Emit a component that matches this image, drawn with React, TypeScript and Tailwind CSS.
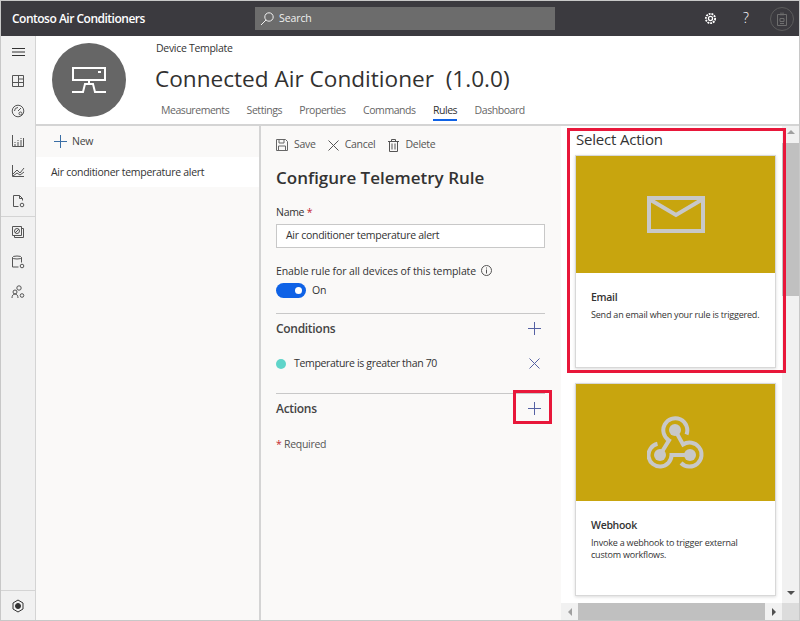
const small = "text-[10.5px] tracking-[-0.28px]";

function NavIcon({ children }: { children: React.ReactNode }) {
  return (
    <div className="flex h-[30px] w-full items-center justify-center text-[#555]">
      <svg width="16" height="16" viewBox="0 0 16 16" fill="none" stroke="currentColor" strokeWidth="1">
        {children}
      </svg>
    </div>
  );
}

function PlusIcon({ color = "#5561a3" }: { color?: string }) {
  return (
    <svg width="13" height="13" viewBox="0 0 13 13" stroke={color} strokeWidth="1">
      <path d="M6.5 0v13M0 6.5h13" />
    </svg>
  );
}

function CrossIcon({ color = "#5561a3" }: { color?: string }) {
  return (
    <svg width="11" height="11" viewBox="0 0 11 11" stroke={color} strokeWidth="1">
      <path d="M.5.5l10 10M10.5.5l-10 10" />
    </svg>
  );
}

function Sidebar() {
  return (
    <aside className="flex w-[35px] shrink-0 flex-col border-r border-[#d4d4d4] bg-[#f1f1f1]">
      <div className="flex h-[30px] items-center justify-center pt-[1px]">
        <svg width="13" height="10" viewBox="0 0 13 10" stroke="#333" strokeWidth="1">
          <path d="M0 1.5h13M0 5h13M0 8.5h13" />
        </svg>
      </div>
      <NavIcon><path d="M2.5 2.5h11v11h-11zM2.5 9.5h11M8.5 2.5v11M8.5 6h5" /></NavIcon>
      <NavIcon>
        <circle cx="8" cy="8" r="5.8" />
        <path d="M8 8l3-3M4.5 8a3.5 3.5 0 0 1 3.5-3.5" />
        <circle cx="10.5" cy="10.5" r="1.5" />
      </NavIcon>
      <NavIcon><path d="M2.5 2v11.5H14M5 11v2M5 9v1M8 9v4M8 7v1M11 7v6M11 5v1M13.5 5v8" /></NavIcon>
      <NavIcon><path d="M2.5 2v11.5H14M3 11l4-4 3 3 4-5M3 13l4-3 3 2 4-3" /></NavIcon>
      <div className="border-b border-[#d4d4d4]">
        <NavIcon>
          <path d="M3.5 2.5h6l3 3v2M3.5 2.5v11h5M9.5 2.5v3h3" />
          <circle cx="12" cy="12" r="1.8" />
        </NavIcon>
      </div>
      <NavIcon>
        <path d="M2.5 2.5h9v9h-9zM4.5 11.5v2h9v-9h-2M5 9l4-4" />
        <circle cx="7" cy="7" r="2.5" />
      </NavIcon>
      <NavIcon>
        <ellipse cx="7" cy="3.5" rx="4.5" ry="1.5" />
        <path d="M2.5 3.5v9.5h6M11.5 3.5v5" />
        <circle cx="12" cy="12" r="1.8" />
      </NavIcon>
      <NavIcon>
        <circle cx="9" cy="4" r="2.2" />
        <circle cx="5" cy="8" r="2" />
        <path d="M2 14c0-2.5 1.2-4 3-4s3 1.5 3 4" />
        <circle cx="12" cy="11.5" r="1.8" />
      </NavIcon>
      <div className="mt-auto flex h-[30px] items-center justify-center border-t border-[#d4d4d4]">
        <svg width="14" height="14" viewBox="0 0 14 14" fill="none" stroke="#333">
          <path d="M7 1l5 3v6l-5 3-5-3V4z" />
          <circle cx="7" cy="7" r="2.5" fill="#333" />
        </svg>
      </div>
    </aside>
  );
}

function TopBar() {
  return (
    <header className="flex h-[35px] shrink-0 items-center bg-[#3b3a3f] pl-[11px] pr-[5px] text-white">
      <span className="w-[243px] text-[12px] font-semibold tracking-[-0.5px]">Contoso Air Conditioners</span>
      <div className="flex h-[23px] w-[300px] items-center gap-[5px] bg-[#6c6c6c] pl-[5px] text-[10.5px] tracking-[-0.1px] text-[#f0f0f0]">
        <svg width="14" height="14" viewBox="0 0 14 14" fill="none" stroke="#f0f0f0">
          <circle cx="9" cy="5" r="4.2" />
          <path d="M6 8l-5 5" />
        </svg>
        Search
      </div>
      <svg className="ml-auto mr-[26px]" width="13" height="13" viewBox="0 0 14 14" fill="none" stroke="#fff" strokeWidth="1.4">
        <circle cx="7" cy="7" r="2.2" />
        <circle cx="7" cy="7" r="5" strokeDasharray="2 1" strokeWidth="2" />
      </svg>
      <span className="mr-[21px] -translate-y-[1px] text-[14px] font-light leading-none">?</span>
      <div className="flex h-[24px] w-[24px] items-center justify-center rounded-full border border-[#5c5c5c]">
        <svg width="10" height="14" viewBox="0 0 10 14" fill="none" stroke="#6e6e6e">
          <path d="M.5 2.5h9v11h-9zM4 .5v3M6 .5v3" />
          <path d="M3 6.5h4v3H3zM3 11.5h4" />
        </svg>
      </div>
    </header>
  );
}

function TemplateHeader() {
  const tabs = ["Measurements", "Settings", "Properties", "Commands", "Rules", "Dashboard"];
  return (
    <div className="flex h-[90px] shrink-0 border-b-2 border-[#d4d4d4] bg-white">
      <div className="ml-[16px] mt-[7px] flex h-[74px] w-[74px] items-center justify-center rounded-full bg-[#666]">
        <svg width="36" height="30" viewBox="0 0 36 30" fill="none" stroke="#fff" strokeWidth="2">
          <rect x="2" y="3" width="32" height="12" />
          <rect x="27" y="6" width="3" height="2" fill="#fff" stroke="none" />
          <path d="M18 15v4M1 27h11l2-8h8l2 8h11" />
        </svg>
      </div>
      <div className="ml-[29px] flex flex-col">
        <div className="ml-[1px] mt-[5px] text-[10.5px] leading-[15px] tracking-[-0.3px] text-[#333]">Device Template</div>
        <div className="mt-[6px] whitespace-pre text-[22.6px] leading-[33px] text-[#323130]">Connected Air Conditioner  (1.0.0)</div>
        <nav className="ml-[6px] mt-[8px] flex gap-[17.4px] text-[10.5px] font-medium tracking-[-0.45px] text-[#666]">
          {tabs.map((t) => (
            <span key={t} className={t === "Rules" ? "border-b-2 border-[#0f62e6] pb-[1px] leading-[15px] text-[#333]" : "leading-[15px]"}>
              {t}
            </span>
          ))}
        </nav>
      </div>
    </div>
  );
}

function RuleList() {
  return (
    <div className="flex w-[225px] shrink-0 flex-col border-r-2 border-[#d4d4d4]">
      <div className={`flex h-[31px] items-center gap-[5px] pl-[18px] text-[#444] ${small}`}>
        <PlusIcon color="#3a6ea5" />
        New
      </div>
      <div className={`flex h-[30px] items-center bg-white pl-[15px] pt-[1px] text-[#333] ${small}`}>
        Air conditioner temperature alert
      </div>
    </div>
  );
}

function RuleForm() {
  return (
    <div className="flex w-[300px] shrink-0 flex-col pl-[15px] pr-[16px] text-[#333]">
      <div className={`flex h-[36px] items-center pt-[2px] text-[#555] ${small}`}>
        <svg className="mr-[6px]" width="12" height="12" viewBox="0 0 12 12" fill="none" stroke="#666">
          <path d="M.5.5h9l2 2v9H.5zM3 .5v3.5h5V.5M2.5 11.5V7h7v4.5" />
        </svg>
        <span className="mr-[12px]">Save</span>
        <CrossIcon color="#555" />
        <span className="ml-[6px] mr-[13px]">Cancel</span>
        <svg className="mr-[6px]" width="11" height="13" viewBox="0 0 11 13" fill="none" stroke="#555">
          <path d="M0 2.5h11M3.5 2.5v-2h4v2M1.5 2.5v10h8v-10M4 4.5v6M7 4.5v6" />
        </svg>
        <span>Delete</span>
      </div>
      <h2 className="mt-[4px] text-[17px] font-semibold leading-[24px] text-[#333]">Configure Telemetry Rule</h2>
      <div className={`mt-[14px] leading-[16px] ${small}`}>
        Name <span className="text-[#c4262e]">*</span>
      </div>
      <div className={`mt-[4px] flex h-[24px] items-center border border-[#c8c8c8] bg-white pl-[9px] ${small}`}>
        Air conditioner temperature alert
      </div>
      <div className="mt-[15px] flex items-center text-[10.5px] leading-[16px] tracking-[-0.1px]">
        Enable rule for all devices of this template
        <svg className="ml-[5px] -translate-y-[1px]" width="11" height="11" viewBox="0 0 11 11" fill="none" stroke="#555">
          <circle cx="5.5" cy="5.5" r="5" />
          <path d="M5.5 4.5v4M5.5 2.5v1" />
        </svg>
      </div>
      <div className={`mt-[4px] flex items-center gap-[6px] ${small}`}>
        <div className="flex h-[15px] w-[30px] items-center justify-end rounded-full bg-[#0f62e6] pr-[4px]">
          <div className="h-[7px] w-[7px] rounded-full bg-white" />
        </div>
        On
      </div>
      <div className="mt-[14px] flex h-[31px] items-center justify-between border-t border-[#c8c8c8] pr-[4px]">
        <span className="text-[12px] font-semibold tracking-[-0.3px] text-[#444]">Conditions</span>
        <PlusIcon />
      </div>
      <div className="mt-[10px] flex h-[20px] items-center pr-[5px] text-[10.5px] tracking-[-0.33px]">
        <span className="mr-[8px] h-[10px] w-[10px] rounded-full bg-[#5fd4c9]" />
        Temperature is greater than 70
        <span className="ml-auto"><CrossIcon /></span>
      </div>
      <div className="mt-[19px] flex h-[31px] items-center justify-between border-t border-[#c8c8c8] pr-[4px]">
        <span className="text-[12px] font-semibold tracking-[-0.3px] text-[#444]">Actions</span>
        <PlusIcon />
      </div>
      <div className={`mt-[12px] leading-[16px] text-[#555] ${small}`}>
        <span className="text-[#c4262e]">*</span> Required
      </div>
    </div>
  );
}

function ActionCard({ title, text, icon }: { title: string; text: string; icon: React.ReactNode }) {
  return (
    <div className="h-[213px] w-[201px] border border-[#d8d8d8] bg-white shadow-[0_1px_3px_rgba(0,0,0,0.15)]">
      <div className="flex h-[117px] items-center justify-center bg-[#c8a50e]">{icon}</div>
      <div className="px-[15px] pt-[17px]">
        <div className="text-[10.5px] font-semibold leading-[14px] tracking-[-0.3px] text-[#333]">{title}</div>
        <div className="mt-[5px] text-[9px] leading-[12px] tracking-[-0.2px] text-[#333]">{text}</div>
      </div>
    </div>
  );
}

function ActionPanel() {
  return (
    <div className="relative flex min-w-0 flex-1 flex-col bg-white">
      <div className="flex min-h-0 flex-1">
        <div className="flex-1 overflow-hidden pl-[14px] pt-[2px]">
          <div className="ml-[1px] h-[27px] text-[15px] leading-[22px] tracking-[-0.2px] text-[#333]">Select Action</div>
          <ActionCard
            title="Email"
            text="Send an email when your rule is triggered."
            icon={
              <svg width="58" height="37" viewBox="0 0 58 37" fill="none" stroke="#c8c8c8" strokeWidth="4">
                <path d="M2 2h54v33H2zM2 3l27 16 27-16" />
              </svg>
            }
          />
          <div className="mt-[15px]">
            <ActionCard
              title="Webhook"
              text="Invoke a webhook to trigger external custom workflows."
              icon={
                <svg width="58" height="54" viewBox="0 0 58 54" fill="none" stroke="#c8c8c8" strokeWidth="4">
                  <circle cx="28" cy="14" r="6" fill="#c8c8c8" stroke="none" />
                  <circle cx="13" cy="39" r="6" fill="#c8c8c8" stroke="none" />
                  <circle cx="43" cy="39" r="6" fill="#c8c8c8" stroke="none" />
                  <path d="M39.5 18.5A12 12 0 1 0 22 24.4L13 39" />
                  <path d="M10.5 27.8A11.5 11.5 0 1 0 24.5 39H43" />
                  <path d="M28 14l8 14.5A12 12 0 1 1 34 47" />
                </svg>
              }
            />
          </div>
        </div>
        <div className="flex w-[17px] shrink-0 flex-col items-center bg-[#f1f1f1] pt-[4px]">
          <div className="h-0 w-0 border-x-[4px] border-b-[4px] border-x-transparent border-b-[#a0a0a0]" />
          <div className="mt-[9px] h-[153px] w-full bg-[#c0c0c0]" />
          <div className="mb-[8px] mt-auto h-0 w-0 border-x-[4px] border-t-[4px] border-x-transparent border-t-[#505050]" />
        </div>
      </div>
      <div className="flex h-[17px] shrink-0 bg-[#f1f1f1]">
        <div className="flex w-[17px] items-center justify-center">
          <div className="h-0 w-0 border-y-[4px] border-r-[4px] border-y-transparent border-r-[#a0a0a0]" />
        </div>
        <div className="w-[187px] bg-[#c0c0c0]" />
        <div className="flex w-[17px] items-center justify-center">
          <div className="h-0 w-0 border-y-[4px] border-l-[4px] border-y-transparent border-l-[#505050]" />
        </div>
        <div className="flex-1 bg-[#dcdcdc]" />
      </div>
      {/* red callouts */}
      <div className="pointer-events-none absolute left-[6px] top-[2px] h-[245px] w-[219px] border-[3px] border-[#e8173a]" />
      <div className="pointer-events-none absolute -left-[48px] top-[264px] h-[34px] w-[39px] border-[3px] border-[#e8173a]" />
    </div>
  );
}

export default function App() {
  return (
    <div className="flex h-[621px] w-[800px] flex-col overflow-hidden border border-[#c8c8c8] font-['Open_Sans','Liberation_Sans',sans-serif]">
      <TopBar />
      <div className="flex min-h-0 flex-1">
        <Sidebar />
        <main className="flex min-w-0 flex-1 flex-col bg-[#faf9f8]">
          <TemplateHeader />
          <div className="flex min-h-0 flex-1">
            <RuleList />
            <RuleForm />
            <ActionPanel />
          </div>
        </main>
      </div>
    </div>
  );
}
